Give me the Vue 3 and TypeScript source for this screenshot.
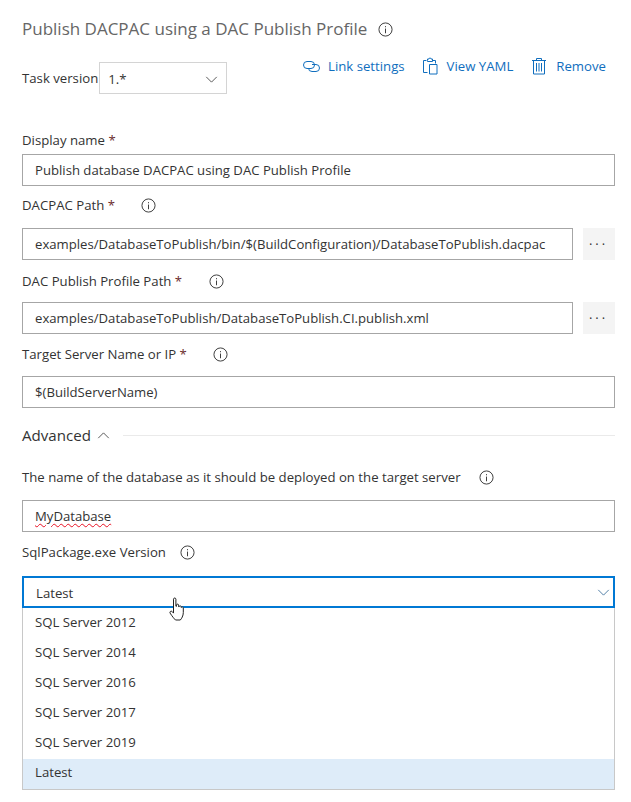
<template>
  <div class="task-form">
    <svg width="0" height="0" class="defs">
      <defs>
        <g id="info-glyph">
          <circle cx="8" cy="8" r="7" fill="none" stroke="currentColor" stroke-width="1" />
          <rect x="7.5" y="7" width="1" height="5" fill="currentColor" />
          <rect x="7.5" y="4.4" width="1" height="1.2" fill="currentColor" />
        </g>
      </defs>
    </svg>

    <!-- title -->
    <h1 class="task-title">
      Publish DACPAC using a DAC Publish Profile
      <svg class="info title-info" viewBox="0 0 16 16"><use href="#info-glyph" /></svg>
    </h1>

    <!-- version + actions -->
    <div class="top-row">
      <div class="version">
        <span class="version-label">Task version</span>
        <div class="version-select">
          <span>1.*</span>
          <svg class="chevron" viewBox="0 0 14 8"><path d="M1 1l6 6 6-6" /></svg>
        </div>
      </div>
      <div class="actions">
        <a class="action link-action">
          <svg viewBox="0 0 17 13" class="action-icon link">
            <rect x="0.5" y="1.5" width="11" height="7" rx="3.5" />
            <path d="M9 4.500h4a3.500 3.500 0 0 1 0 7H9a3.500 3.500 0 0 1-3.500-3.500" />
          </svg>
          Link settings
        </a>
        <a class="action">
          <svg viewBox="0 0 16 18" class="action-icon tall">
            <path d="M5.500 15.500h-4V3.500h3M10.500 3.500h3v3" />
            <path d="M5.500 3.500V2h1.500a1 1 0 0 1 2 0h1.500v2.500h-5z" />
            <path d="M7.500 7.500h7.500v9.500H7.500z" />
          </svg>
          View YAML
        </a>
        <a class="action">
          <svg viewBox="0 0 16 18" class="action-icon tall">
            <path d="M1 3.500h14M5.500 3.500V1.500h5v2M2.500 3.500v13.500h11V3.500" />
            <path d="M5.500 6v8.500M8 6v8.500M10.500 6v8.500" />
          </svg>
          Remove
        </a>
      </div>
    </div>

    <!-- fields -->
    <div v-for="f in fields" :key="f.label" class="field" :class="f.cls">
      <label class="field-label">
        <span>{{ f.label }} <span class="req">*</span></span>
        <svg v-if="f.info" class="info" viewBox="0 0 16 16"><use href="#info-glyph" /></svg>
      </label>
      <div class="field-body">
        <div class="text-input">{{ f.value }}</div>
        <button v-if="f.browse" class="browse">···</button>
      </div>
    </div>

    <!-- advanced -->
    <div class="advanced">
      <span>Advanced</span>
      <svg class="chevron up" viewBox="0 0 14 8"><path d="M1 7l6-6 6 6" /></svg>
      <span class="rule"></span>
    </div>

    <div class="field db-field">
      <label class="field-label">
        <span>The name of the database as it should be deployed on the target server</span>
        <svg class="info" viewBox="0 0 16 16"><use href="#info-glyph" /></svg>
      </label>
      <div class="field-body">
        <div class="text-input"><span class="misspelled">MyDatabase</span></div>
      </div>
    </div>

    <div class="field sql-field">
      <label class="field-label">
        <span>SqlPackage.exe Version</span>
        <svg class="info" viewBox="0 0 16 16"><use href="#info-glyph" /></svg>
      </label>
      <div class="combo">
        <div class="combo-box">
          <span>Latest</span>
          <svg class="chevron blue" viewBox="0 0 14 8"><path d="M1 1l6 6 6-6" /></svg>
        </div>
        <ul class="combo-list">
          <li v-for="o in versions" :key="o" :class="{ selected: o === 'Latest' }">{{ o }}</li>
        </ul>
        <!-- mouse pointer over the open dropdown -->
        <svg class="pointer" viewBox="0 0 18 25">
          <path
            d="M5.500 2.200c0-1.600 2.400-1.600 2.400 0v7l.6.100V8.100c0-1.300 2.100-1.300 2.100 0v1.500l.5.100c.1-1.200 2-1.200 2.100.1l.1.700c.3-1 2-.8 2 .5v4.600c0 3.200-1.800 6.200-3 7.400H7.500c-1.200-1-3.400-3.800-5.400-6.900-.8-1.300 1-2.700 2.100-1.500l1.300 1.500z"
          />
        </svg>
      </div>
    </div>
  </div>
</template>

<script setup lang="ts">
interface Field {
  label: string;
  value: string;
  info?: boolean;
  browse?: boolean;
  cls: string;
}

const fields: Field[] = [
  {
    label: "Display name",
    value: "Publish database DACPAC using DAC Publish Profile",
    cls: "f-display",
  },
  {
    label: "DACPAC Path",
    value: "examples/DatabaseToPublish/bin/$(BuildConfiguration)/DatabaseToPublish.dacpac",
    info: true,
    browse: true,
    cls: "f-path",
  },
  {
    label: "DAC Publish Profile Path",
    value: "examples/DatabaseToPublish/DatabaseToPublish.CI.publish.xml",
    info: true,
    browse: true,
    cls: "f-profile",
  },
  {
    label: "Target Server Name or IP",
    value: "$(BuildServerName)",
    info: true,
    cls: "f-target",
  },
];

const versions = [
  "SQL Server 2012",
  "SQL Server 2014",
  "SQL Server 2016",
  "SQL Server 2017",
  "SQL Server 2019",
  "Latest",
];
</script>

<style>
html,
body {
  margin: 0;
  background: #fff;
}
</style>

<style scoped>
.task-form {
  position: relative;
  width: 631px;
  height: 802px;
  box-sizing: border-box;
  padding: 18px 16px 0 22px;
  font-family: "Open Sans", "Noto Sans", sans-serif;
  font-size: 13.2px;
  color: #333;
  overflow: hidden;
}

.defs {
  position: absolute;
}

.task-title {
  margin: 0;
  height: 22px;
  line-height: 22px;
  font-size: 17px;
  font-weight: 400;
  color: #666;
  display: flex;
  align-items: center;
  gap: 11px;
}

.info {
  width: 15px;
  height: 15px;
  color: #333;
  flex: none;
}

.top-row {
  display: flex;
  justify-content: space-between;
  margin: 22px 9px 0 0;
  height: 32px;
}

.version {
  display: flex;
  align-items: center;
  gap: 1px;
}

.version-select {
  width: 128px;
  height: 32px;
  box-sizing: border-box;
  border: 1px solid #d4d4d4;
  display: flex;
  align-items: center;
  justify-content: space-between;
  padding: 2px 8px 0 8px;
}

.chevron {
  width: 13px;
  height: 7px;
  fill: none;
  stroke: #444;
  stroke-width: 1;
}

.actions {
  display: flex;
  gap: 18px;
  margin-top: -6px;
  height: 20px;
}

.action {
  display: flex;
  align-items: center;
  gap: 9px;
  color: #106ebe;
}

.link-action {
  gap: 8px;
  margin-right: -1px;
}

.action-icon {
  width: 16px;
  height: 16px;
  fill: none;
  stroke: #106ebe;
  stroke-width: 1;
}

.action-icon.link {
  width: 17px;
  height: 13px;
}

.action-icon.tall {
  height: 18px;
}

.field-label {
  display: flex;
  align-items: center;
  height: 22px;
}

.field-label .info {
  margin-left: 26px;
}

.req {
  color: #6b2c2c;
}

.field-body {
  display: flex;
  gap: 10px;
}

.text-input {
  flex: 1;
  height: 32px;
  box-sizing: border-box;
  border: 1px solid #a6a6a6;
  padding: 0 12px;
  font-size: 13.15px;
  line-height: 30px;
  white-space: nowrap;
}

.browse {
  width: 32px;
  height: 32px;
  padding: 0 1px 0 0;
  border: none;
  background: #f4f4f4;
  color: #333;
  font: inherit;
  font-size: 13px;
  letter-spacing: 3px;
}

.f-display {
  margin-top: 35px;
}

.f-display .field-label {
  margin-bottom: 3px;
}

.f-path {
  margin-top: 8px;
}

.f-path .field-label {
  margin-bottom: 12px;
}

.f-profile {
  margin-top: 10px;
}

.f-profile .field-label {
  margin-bottom: 10px;
}

.f-profile .info {
  margin-left: 27px;
}

.f-target {
  margin-top: 9px;
}

.f-target .field-label {
  margin-bottom: 11px;
}

.advanced {
  display: flex;
  align-items: center;
  gap: 6px;
  margin-top: 17px;
  height: 20px;
  font-size: 15.100px;
  color: #333;
}

.rule {
  flex: 1;
  height: 1px;
  margin-left: 7px;
  background: #eaeaea;
}

.db-field {
  margin-top: 21px;
}

.db-field .field-label {
  margin-bottom: 12px;
}

.db-field .info {
  margin-left: 18px;
}

.sql-field .info {
  margin-left: 14px;
}

.misspelled {
  text-decoration: underline wavy #e81123 1px;
  text-underline-offset: 2px;
}

.sql-field {
  margin-top: 9px;
}

.sql-field .field-label {
  margin-bottom: 13px;
}

.combo {
  position: relative;
}

.combo-box {
  height: 32px;
  box-sizing: border-box;
  border: 2px solid #0078d4;
  display: flex;
  align-items: center;
  justify-content: space-between;
  padding: 1px 3px 0 12px;
}

.blue {
  stroke: #3b6f9c;
}

.combo-list {
  list-style: none;
  margin: 0;
  padding: 1px 0 0;
  border: 1px solid #c8c8c8;
  border-top: none;
}

.combo-list li {
  height: 30px;
  line-height: 26px;
  padding-left: 12px;
}

.combo-list li.selected {
  background: #deecf9;
}

.pointer {
  position: absolute;
  left: 146px;
  top: 21px;
  width: 18px;
  height: 25px;
  fill: #fff;
  stroke: #222;
  stroke-width: 1;
}
</style>
